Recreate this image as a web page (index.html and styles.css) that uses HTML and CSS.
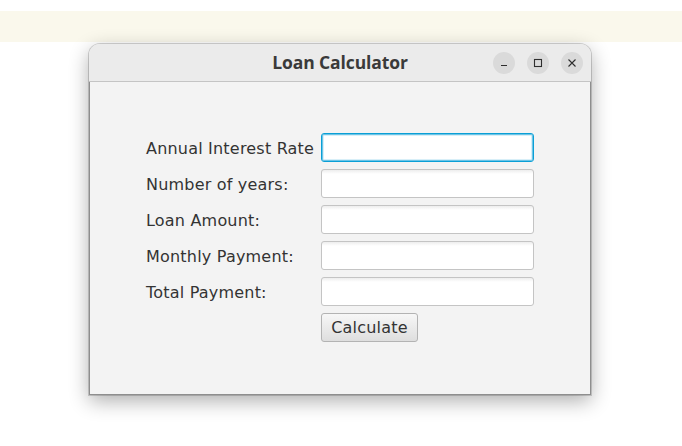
FILE: index.html
```html
<!DOCTYPE html>
<html>
<head>
<meta charset="utf-8">
<link rel="stylesheet" href="styles.css">
</head>
<body>
<div class="band"></div>
<div class="window">
  <div class="titlebar">
    <div class="title">Loan Calculator</div>
    <div class="controls">
      <span class="ctl"><svg width="10" height="10" viewBox="0 0 10 10"><path d="M2 7.5h6" stroke="#2e2e2e" stroke-width="1.2"/></svg></span>
      <span class="ctl"><svg width="10" height="10" viewBox="0 0 10 10"><rect x="1.5" y="1.5" width="7" height="7" fill="none" stroke="#2e2e2e" stroke-width="1.1"/></svg></span>
      <span class="ctl"><svg width="10" height="10" viewBox="0 0 10 10"><path d="M1.5 1.5l7 7M8.5 1.5l-7 7" stroke="#2e2e2e" stroke-width="1.1"/></svg></span>
    </div>
  </div>
  <div class="content">
    <div class="form">
      <label class="lbl">Annual Interest Rate</label><input class="field focused" type="text">
      <label class="lbl">Number of years:</label><input class="field" type="text">
      <label class="lbl">Loan Amount:</label><input class="field" type="text">
      <label class="lbl">Monthly Payment:</label><input class="field" type="text">
      <label class="lbl">Total Payment:</label><input class="field" type="text">
      <span></span><div><button class="btn">Calculate</button></div>
    </div>
  </div>
</div>
</body>
</html>
```
FILE: styles.css
```css
html, body {
  margin: 0;
  padding: 0;
  background: #ffffff;
}
body {
  width: 682px;
  height: 446px;
  overflow: hidden;
}
.band {
  margin-top: 11px;
  height: 31px;
  background: #faf8ec;
}
.window {
  margin-top: 2px;
  margin-left: 89px;
  width: 502px;
  height: 351px;
  box-sizing: border-box;
  border-radius: 11px 11px 0 0;
  background: #f3f3f3;
  box-shadow: 0 6px 20px rgba(0,0,0,0.32), 0 0 0 1px rgba(0,0,0,0.16);
  display: flex;
  flex-direction: column;
  overflow: hidden;
}
.titlebar {
  height: 37px;
  flex: none;
  background: #ebebeb;
  border-bottom: 1px solid #c4c4c4;
  position: relative;
  display: flex;
  align-items: center;
  justify-content: center;
}
.title {
  font-family: "Open Sans", sans-serif;
  font-weight: 700;
  font-size: 17.5px;
  color: #3a3a3a;
  letter-spacing: -0.1px;
  padding-bottom: 1px;
}
.controls {
  position: absolute;
  right: 8px;
  top: 8px;
  display: flex;
  gap: 12px;
}
.ctl {
  width: 22px;
  height: 22px;
  border-radius: 50%;
  background: #dadada;
  display: flex;
  align-items: center;
  justify-content: center;
}
.content {
  flex: 1;
  border: 1px solid #8e8e8e;
  border-top: none;
  padding: 51px 0 0 56px;
}
.form {
  display: grid;
  grid-template-columns: 175px 213px;
  grid-auto-rows: 29px;
  row-gap: 7px;
  align-items: center;
}
.lbl {
  font-family: "DejaVu Sans", sans-serif;
  font-size: 16px;
  letter-spacing: 0.2px;
  color: #333333;
  white-space: nowrap;
  padding-top: 1px;
}
.field {
  box-sizing: border-box;
  width: 213px;
  height: 29px;
  margin: 0;
  border: 1px solid #c4c4c4;
  border-radius: 3px;
  background: linear-gradient(#ededed, #ffffff 4px);
  outline: none;
}
.field.focused {
  border: 1px solid #0a9fd6;
  box-shadow: inset 0 0 0 1px #6cc4e6, inset 0 0 0 2px #d8eff8;
  background: #ffffff;
}
.btn {
  box-sizing: border-box;
  height: 29px;
  width: 97px;
  padding: 0;
  border: 1px solid #b3b3b3;
  border-radius: 3px;
  background: linear-gradient(#f7f7f7, #dedede);
  font-family: "DejaVu Sans", sans-serif;
  font-size: 16px;
  letter-spacing: 0.2px;
  color: #333333;
}
```
